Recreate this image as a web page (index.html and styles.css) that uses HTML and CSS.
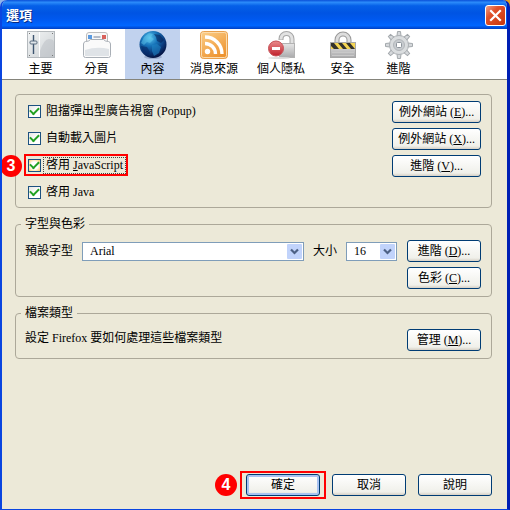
FILE: index.html
```html
<!DOCTYPE html>
<html lang="zh-Hant">
<head>
  <meta charset="UTF-8">
  <meta name="viewport" content="width=device-width, initial-scale=1.0">
  <title>選項</title>
  <link rel="stylesheet" href="styles.css">
</head>
<body>
  <div class="window">
    <header class="titlebar">
      <h1>選項</h1>
      <button class="close" type="button" aria-label="關閉">
        <svg width="13" height="13" viewBox="0 0 13 13"><path d="M2 2l9 9M11 2l-9 9" stroke="#fff" stroke-width="2.2" stroke-linecap="square"/></svg>
      </button>
    </header>

    <nav class="toolbar">
      <a href="#main">
        <svg width="28" height="28" viewBox="0 0 28 28">
          <defs><linearGradient id="panel" x2="1" y2="1"><stop offset="0" stop-color="#f3f5f6"/><stop offset="1" stop-color="#cbd0d3"/></linearGradient></defs>
          <rect x=".5" y=".5" width="27" height="26" fill="url(#panel)" stroke="#b4b9bd"/>
          <path d="M13 20Q17 8 22 8T27 12V26H13z" fill="#b9bec3" opacity=".5"/>
          <path d="M12.500 1v25" stroke="#fff"/>
          <path d="M6.500 4v19" stroke="#3d5570" stroke-width="1.400"/>
          <rect x="3" y="10" width="7" height="3" rx="1" fill="#dfe5ea" stroke="#5d6f80"/>
          <path d="M2 2.500h1M25 2.500h1M2 24.500h1M25 24.500h1" stroke="#777"/>
        </svg>
        主要
      </a>
      <a href="#tabs">
        <svg width="28" height="28" viewBox="0 0 28 28">
          <path d="M3.500 11V4q0-2.500 2.500-2.500h16q2.500 0 2.500 2.500v7" fill="#f8f8f8" stroke="#bdbdbd"/>
          <rect x="5" y="4" width="4" height="4" fill="#5b9ae0"/>
          <path d="M10.500 6h7" stroke="#b5bcc8" stroke-width="2"/>
          <rect x="19" y="4" width="4" height="4" fill="#d9625c"/>
          <path d="M.5 13q0-2 2-2.500l3-.5 2-1.500h13l2 1.500 3 .5q2 .5 2 2.500v11.500q0 2-2 2h-23q-2 0-2-2z" fill="#fafafa" stroke="#a9afb6"/>
          <path d="M2 25v-6q12-4 24-1v7z" fill="#dfe3e7"/>
        </svg>
        分頁
      </a>
      <a class="active" href="#content">
        <svg width="28" height="28" viewBox="0 0 28 28">
          <defs><radialGradient id="globe" cx=".38" cy=".25" r=".75"><stop offset="0" stop-color="#58c2ec"/><stop offset=".4" stop-color="#1672b8"/><stop offset=".75" stop-color="#0a3879"/><stop offset="1" stop-color="#051544"/></radialGradient></defs>
          <ellipse cx="14" cy="26" rx="9" ry="2" fill="#8396bb" opacity=".6"/>
          <circle cx="14" cy="13.500" r="13.500" fill="url(#globe)"/>
          <path d="M5 6l5-4 4 1-2 3 3 2-4 4-3-1-3 3-3-2z" fill="#69cef0" opacity=".45"/>
          <path d="M15 3l6 1 4 5-3 3-4-2-1-4z" fill="#051f58" opacity=".6"/>
          <path d="M13 14l5-1 4 3-2 6-5 3-2-5z" fill="#1f83c4" opacity=".6"/>
          <path d="M2 15l6 1 3 5-2 4q-6-3-7-10z" fill="#062866" opacity=".6"/>
        </svg>
        內容
      </a>
      <a href="#feeds">
        <svg width="28" height="28" viewBox="0 0 28 28">
          <defs><linearGradient id="feed" x2=".6" y2="1"><stop offset="0" stop-color="#fbd08c"/><stop offset="1" stop-color="#ee9430"/></linearGradient></defs>
          <rect x=".5" y=".5" width="27" height="27" rx="3" fill="url(#feed)" stroke="#e9a04c"/>
          <rect x="1.500" y="1.500" width="25" height="25" rx="2" fill="none" stroke="#fbdcae"/>
          <circle cx="7.500" cy="20.500" r="2.700" fill="#fff"/>
          <path d="M5 12.500a10.500 10.500 0 0 1 10.500 10.500M5 6a17 17 0 0 1 17 17" fill="none" stroke="#fff" stroke-width="3.400"/>
        </svg>
        消息來源
      </a>
      <a href="#privacy">
        <svg width="28" height="28" viewBox="0 0 28 28">
          <defs>
            <linearGradient id="steel" y2="1" x2="0"><stop offset="0" stop-color="#e6e6e6"/><stop offset="1" stop-color="#aaaaac"/></linearGradient>
            <linearGradient id="stop" y2="1" x2="0"><stop offset="0" stop-color="#ea8c8c"/><stop offset="1" stop-color="#c01f2b"/></linearGradient>
          </defs>
          <path d="M14 9V8a5.500 5.500 0 0 1 11 0v6" fill="none" stroke="#a6a6a6" stroke-width="5"/>
          <path d="M14 8.500V8a5.500 5.500 0 0 1 11 0v6" fill="none" stroke="#e2e2e2" stroke-width="3"/>
          <rect x="12.500" y="12.500" width="15" height="14" fill="url(#steel)" stroke="#b2b2b2"/>
          <ellipse cx="12" cy="27" rx="11" ry="1" fill="#ddd"/>
          <circle cx="9" cy="17.500" r="7.500" fill="url(#stop)" stroke="#c65258"/>
          <rect x="5" y="16" width="8" height="3" fill="#fff"/>
        </svg>
        個人隱私
      </a>
      <a href="#security">
        <svg width="28" height="28" viewBox="0 0 28 28">
          <path d="M8 13V9a6 6 0 0 1 12 0v4" fill="none" stroke="#999" stroke-width="5"/>
          <path d="M8 13V9a6 6 0 0 1 12 0v4" fill="none" stroke="#ddd" stroke-width="3"/>
          <rect x="1.500" y="11.500" width="25" height="15" fill="url(#steel)" stroke="#a8a8a8"/>
          <rect x="2" y="12" width="24" height="6" fill="#f5d553"/>
          <path d="M2 12h3l5 6H5l-3-3zM9 12h4l5 6h-4zM17 12h4l5 6h-4z" fill="#33322e"/>
          <path d="M3 21.500h22M3 24.500h22" stroke="#c9c9c9"/>
        </svg>
        安全
      </a>
      <a href="#advanced">
        <svg width="28" height="28" viewBox="0 0 28 28">
          <g fill="#d5d8db" stroke="#a3a8ac">
            <path id="teeth" d="M12 5l.5-4.500h3L16 5zM12 23l.5 4.500h3L16 23zM5 12L.5 12.500v3L5 16zM23 12l4.500.5v3L23 16z"/>
            <use href="#teeth" transform="rotate(45 14 14)"/>
          </g>
          <circle cx="14" cy="14" r="9.500" fill="#dadddf" stroke="#adb1b5"/>
          <circle cx="14" cy="14" r="5.500" fill="#c8ccd0" stroke="#b2b6ba"/>
          <rect x="11.500" y="11.500" width="5" height="5" rx="1" fill="#fff" stroke="#8d949c"/>
        </svg>
        進階
      </a>
    </nav>

    <form class="panel">
      <fieldset class="features">
        <div class="checks">
          <label class="check"><input type="checkbox" checked><span>阻擋彈出型廣告視窗 (Popup)</span></label>
          <label class="check"><input type="checkbox" checked><span>自動載入圖片</span></label>
          <div class="step">
            <span class="badge badge-left">3</span>
            <label class="check marked"><input type="checkbox" checked><span>啓用 <u>J</u>avaScript</span></label>
          </div>
          <label class="check"><input type="checkbox" checked><span>啓用 Java</span></label>
        </div>
        <div class="actions">
          <button type="button">例外網站 (<u>E</u>)...</button>
          <button type="button">例外網站 (<u>X</u>)...</button>
          <button type="button">進階 (<u>V</u>)...</button>
        </div>
      </fieldset>

      <fieldset>
        <legend>字型與色彩</legend>
        <div class="row">
          <div class="fonts">
            <label for="font">預設字型</label>
            <div class="combo combo-wide">
              <select id="font"><option>Arial</option></select>
              <svg width="15" height="15" viewBox="0 0 15 15"><rect width="15" height="15" rx="1" fill="#c1d3fb"/><path d="M4 5.500l3.500 3.500L11 5.500" fill="none" stroke="#4d6185" stroke-width="2.200"/></svg>
            </div>
            <label for="size">大小</label>
            <div class="combo">
              <select id="size"><option>16</option></select>
              <svg width="15" height="15" viewBox="0 0 15 15"><rect width="15" height="15" rx="1" fill="#c1d3fb"/><path d="M4 5.500l3.500 3.500L11 5.500" fill="none" stroke="#4d6185" stroke-width="2.200"/></svg>
            </div>
          </div>
          <div class="actions">
            <button type="button">進階 (<u>D</u>)...</button>
            <button type="button">色彩 (<u>C</u>)...</button>
          </div>
        </div>
      </fieldset>

      <fieldset>
        <legend>檔案類型</legend>
        <div class="row">
          <p>設定 Firefox 要如何處理這些檔案類型</p>
          <button type="button">管理 (<u>M</u>)...</button>
        </div>
      </fieldset>

      <footer class="buttons">
        <div class="step ok">
          <span class="badge">4</span>
          <div class="frame"><button class="default" type="submit">確定</button></div>
        </div>
        <button type="button">取消</button>
        <button type="button">說明</button>
      </footer>
    </form>
  </div>
</body>
</html>
```
FILE: styles.css
```css
* {
  box-sizing: border-box;
}

body {
  margin: 0;
  background: linear-gradient(to right, #8fb4ea 50%, #e8a020 50%);
  font-family: "Liberation Serif", "Noto Sans CJK TC", serif;
  font-size: 12px;
  line-height: 14px;
  color: #000;
}

.window {
  display: flex;
  flex-direction: column;
  min-height: 100vh;
  border: solid #0a45e0;
  border-width: 0 3px 1px 2px;
  border-right-color: #001fb4;
  border-radius: 7px 7px 0 0;
  background: #ece9d8;
  overflow: hidden;
}

.titlebar {
  display: flex;
  align-items: center;
  justify-content: space-between;
  height: 29px;
  padding: 2px 1px 0 4px;
  background: linear-gradient(#0a50d8 0%, #2b8bfa 8%, #0560e8 20%, #0054e3 45%, #0058ee 65%, #0066ff 88%, #0040c4 100%);
}

.titlebar h1 {
  margin: 0;
  font-size: 13px;
  line-height: 18px;
  color: #fff;
  text-shadow: 1px 1px #0a2a80;
}

.toolbar {
  display: flex;
  gap: 1px;
  height: 51px;
  padding-left: 11px;
  background: #fff;
  border-bottom: 1px solid #85847b;
}

.toolbar a {
  display: flex;
  flex-direction: column;
  align-items: center;
  gap: 3px;
  min-width: 55px;
  padding: 2px 9px 0;
  color: #000;
  text-decoration: none;
}

.toolbar .active {
  background: #c1d2ee;
}

.panel {
  display: flex;
  flex-direction: column;
  gap: 9px;
  flex: 1;
  padding: 14px 15px 10px 13px;
}

fieldset {
  min-width: 0;
  margin: 0;
  padding: 9px 10px 7px 5px;
  border: 1px solid #aca899;
  border-radius: 4px;
}

legend {
  padding: 0 4px;
}

.features {
  display: flex;
  justify-content: space-between;
  padding: 6px 10px 5px 12px;
}

.checks,
.actions {
  display: flex;
  flex-direction: column;
  gap: 5px;
}

.checks {
  gap: 7px;
}

.check {
  display: flex;
  align-items: center;
  gap: 3px;
  height: 20px;
}

.check span {
  padding: 0 2px 1px;
}

.check input {
  display: grid;
  place-items: center;
  appearance: none;
  width: 13px;
  height: 13px;
  margin: 0;
  border: 1px solid #1c5180;
  background: linear-gradient(135deg, #e6e6e2, #fff 60%);
}

.check input:checked::before {
  content: "";
  width: 7px;
  height: 4px;
  margin-top: -2px;
  border: solid #21a121;
  border-width: 0 0 2px 2px;
  transform: rotate(-45deg);
}

.marked {
  width: fit-content;
  height: 22px;
  margin: -1px 0 -1px -4px;
  padding: 0 1px 0 2px;
  border: 2px solid #f00;
}

.marked input {
  background: radial-gradient(#fff 45%, #fbc761);
}

.marked span {
  outline: 1px dotted #444;
}

.step {
  position: relative;
}

.badge {
  display: grid;
  place-items: center;
  width: 22px;
  height: 22px;
  border-radius: 50%;
  background: #f00;
  color: #fff;
  font: bold 16px/22px "Liberation Sans", sans-serif;
}

/* sits across the window edge, outside the group box */
.badge-left {
  position: absolute;
  right: calc(100% + 6px);
  top: 0;
}

button {
  min-width: 74px;
  height: 22px;
  padding: 0 5px;
  border: 1px solid #003c74;
  border-radius: 3px;
  background: linear-gradient(#fff, #f0f0ea 85%, #d6d0c5);
  color: #000;
  font: inherit;
}

.close {
  display: grid;
  place-items: center;
  min-width: 0;
  width: 21px;
  height: 21px;
  padding: 0;
  border: 1px solid #fff;
  background: linear-gradient(135deg, #f0a088, #e0512b 35%, #c8360c);
}

.row {
  display: flex;
  align-items: flex-start;
  justify-content: space-between;
  padding-left: 4px;
}

.row p {
  margin: 2px 0 0;
}

.fonts {
  display: flex;
  align-items: center;
  gap: 9px;
  flex: 1;
  height: 22px;
  padding-right: 10px;
}

.combo {
  display: grid;
  align-items: center;
  width: 51px;
}

.combo-wide {
  flex: 1;
}

.combo select,
.combo svg {
  grid-area: 1 / 1;
}

.combo select {
  appearance: none;
  width: 100%;
  height: 19px;
  padding: 0 18px 0 7px;
  border: 1px solid #7f9db9;
  border-radius: 0;
  background: #fff;
  color: #000;
  font: inherit;
}

.combo svg {
  justify-self: end;
  margin-right: 2px;
  pointer-events: none;
}

.buttons {
  display: flex;
  align-items: center;
  justify-content: flex-end;
  gap: 12px;
  margin-top: auto;
}

.ok {
  display: flex;
  align-items: center;
  gap: 3px;
  margin-right: -6px;
}

.frame {
  padding: 1px 4px;
  border: 2px solid #f00;
}

.frame button {
  display: block;
}

.default {
  box-shadow: inset 0 0 0 2px #a9c3f2;
}
```
